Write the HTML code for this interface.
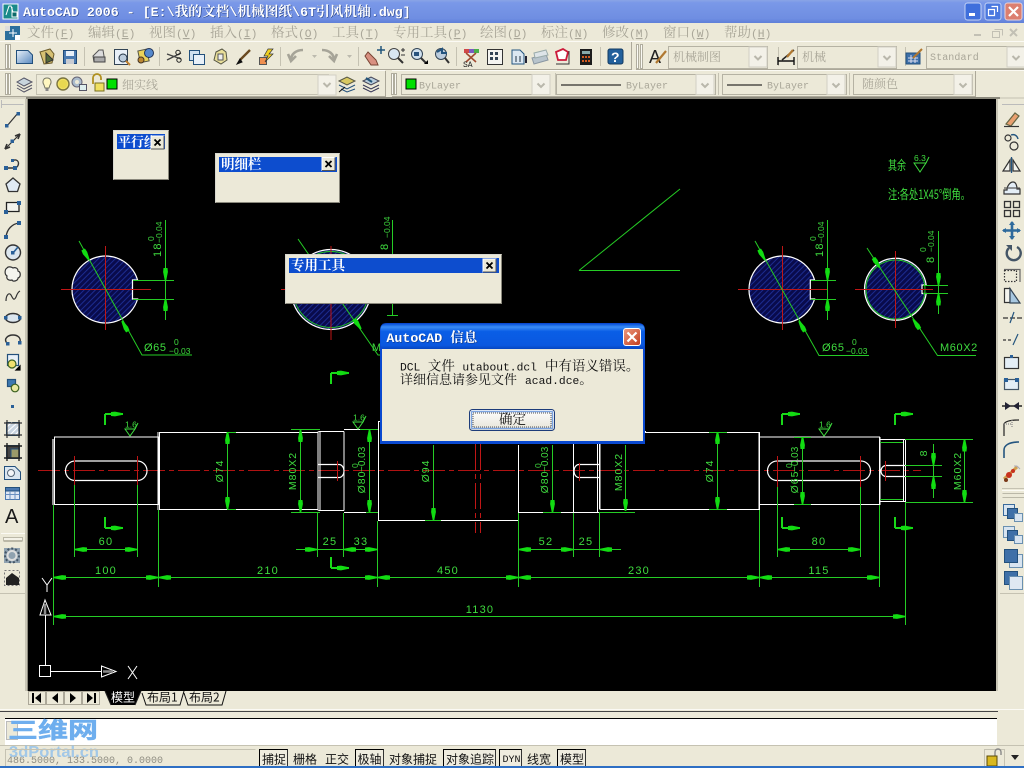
<!DOCTYPE html>
<html><head><meta charset="utf-8"><title>AutoCAD 2006</title>
<style>
html,body{margin:0;padding:0;background:#ece9d8;width:1024px;height:768px;overflow:hidden}
svg{display:block;position:absolute;left:0;top:0}
text{font-family:"Liberation Mono","Noto Serif CJK SC",monospace;white-space:pre}
.c{font-family:"Noto Serif CJK SC","Liberation Serif",serif;font-size:13.5px}
.c12{font-family:"Noto Serif CJK SC","Liberation Serif",serif;font-size:12px}
.m{font-family:"Liberation Mono",monospace;font-size:11.3px}
.t{font-family:"Liberation Mono",monospace;font-size:13.3px}
.tc{font-family:"Noto Serif CJK SC","Liberation Serif",serif;font-size:13.7px}
.m10{font-family:"Liberation Mono",monospace;font-size:10px}
.u{text-decoration:underline}
.d{fill:#a9a698}
.gl{stroke:#25cc25;stroke-width:1;fill:none;shape-rendering:crispEdges}
.gd{stroke:#25cc25;stroke-width:1;fill:none}
.wl{stroke:#fff;stroke-width:1.2;fill:none}
.wc{stroke:#fff;stroke-width:1.2;fill:none;shape-rendering:crispEdges}
.rl{stroke:#c01616;stroke-width:1;fill:none;shape-rendering:crispEdges}
.rd{stroke:#b01212;stroke-width:1.4;fill:none;stroke-dasharray:22 4 5 4;shape-rendering:crispEdges}
.dt{font-family:"Liberation Sans",sans-serif;font-size:11px;fill:#3fdc3f;letter-spacing:1.2px;text-anchor:middle}
.ds{font-family:"Liberation Sans",sans-serif;font-size:8.5px;fill:#3fdc3f}
.dr{font-family:"Liberation Sans",sans-serif;font-size:10.5px;fill:#3fdc3f;letter-spacing:1px;text-anchor:middle}
.ar{fill:#12dc12}
.ic{stroke:#333;fill:none;stroke-width:1.2}
.bl{fill:#2a6098}
.cb{fill:#ece9d8;stroke:#b5b2a3;stroke-width:1;shape-rendering:crispEdges}
.st{font-family:"Noto Sans CJK SC",sans-serif;font-size:12px;fill:#111}
</style></head>
<body>
<svg width="1024" height="768" viewBox="0 0 1024 768" xmlns="http://www.w3.org/2000/svg">
<defs>
<linearGradient id="tb" x1="0" y1="0" x2="0" y2="1"><stop offset="0" stop-color="#8aa4e6"/><stop offset=".12" stop-color="#7a98e8"/><stop offset=".8" stop-color="#6f8ee2"/><stop offset="1" stop-color="#5f7fd8"/></linearGradient>
<linearGradient id="dlg" x1="0" y1="0" x2="0" y2="1"><stop offset="0" stop-color="#0a55dc"/><stop offset=".12" stop-color="#3a8cf5"/><stop offset=".3" stop-color="#0a5ee6"/><stop offset=".85" stop-color="#0a58e0"/><stop offset="1" stop-color="#0746c0"/></linearGradient>
<linearGradient id="cls" x1="0" y1="0" x2="1" y2="1"><stop offset="0" stop-color="#ee9b80"/><stop offset="1" stop-color="#c03a1c"/></linearGradient>
<linearGradient id="btn" x1="0" y1="0" x2="0" y2="1"><stop offset="0" stop-color="#fff"/><stop offset="1" stop-color="#e6e3d6"/></linearGradient>
<linearGradient id="bi" x1="0" y1="0" x2="1" y2="1"><stop offset="0" stop-color="#e8f0f8"/><stop offset="1" stop-color="#5a8ac0"/></linearGradient>
<pattern id="h" width="4" height="4" patternUnits="userSpaceOnUse" patternTransform="rotate(45)"><rect width="4" height="4" fill="#090b4c"/><rect width="1" height="4" fill="#1c2c90"/></pattern>
<path id="au" class="ar" d="M-.8 0 L.8 0 L2.4 8 L2 12 L-2 12 L-2.4 8Z"/>
<path id="ad" class="ar" d="M-.8 0 L.8 0 L2.4 -8 L2 -12 L-2 -12 L-2.4 -8Z"/>
<path id="al" class="ar" d="M0 -.8 L0 .8 L8 2.4 L12 2 L12 -2 L8 -2.4Z"/>
<path id="arr" class="ar" d="M0 -.8 L0 .8 L-8 2.4 L-12 2 L-12 -2 L-8 -2.4Z"/>
<path id="chev" d="M-3.5 -2 L0 1.5 L3.5 -2" fill="none" stroke="#b9b7ab" stroke-width="2"/>
<g id="cbtn"><rect x="-9" y="-10" width="18" height="20" fill="#f3f1e8" stroke="#d2d0c4"/><use href="#chev" y="1"/></g>
<g id="fc"><rect x="0" y="0" width="13" height="13" fill="#ece9d8" stroke="#fff"/><path d="M13 0V13H0" fill="none" stroke="#555"/><path d="M3.5 3.5L9.5 9.5M9.5 3.5L3.5 9.5" stroke="#000" stroke-width="1.8"/></g>
<g id="stl"><path d="M0 0H18M0 0V11" stroke="#19d919" stroke-width="1.7" fill="none" shape-rendering="crispEdges"/><use href="#arr" x="18" y="0"/></g>
<g id="sbl"><path d="M0 0H18M0 0V-11" stroke="#19d919" stroke-width="1.7" fill="none" shape-rendering="crispEdges"/><use href="#arr" x="18" y="0"/></g>
<g id="sf"><path d="M-5 -7H5L0 0Z M-5 -7 L5 -7" stroke="#3fdc3f" fill="none"/><path d="M5 -7L8 -13" stroke="#3fdc3f" fill="none"/><text x="-5" y="-8.5" class="ds">1.6</text></g>
</defs>

<rect width="1024" height="768" fill="#ece9d8"/>

<!-- title bar -->
<rect x="0" y="0" width="1024" height="23" fill="url(#tb)"/>
<g>
<rect x="3" y="4" width="15" height="15" fill="#1a8a8a" stroke="#fff"/>
<path d="M6 15L9 6H11L14 15M12 7V15H17" stroke="#fff" fill="none"/>
<rect x="12" y="12" width="5" height="5" fill="#0c6a6a" stroke="#fff"/>
</g>
<text y="16.6" fill="#1f3b80" x="23.6" font-weight="bold"><tspan class="t">AutoCAD 2006 - [E:\</tspan><tspan class="tc">我的文档</tspan><tspan class="t">\</tspan><tspan class="tc">机械图纸</tspan><tspan class="t">\6T</tspan><tspan class="tc">引风机轴</tspan><tspan class="t">.dwg]</tspan></text>
<text y="16" fill="#fff" x="23" font-weight="bold"><tspan class="t">AutoCAD 2006 - [E:\</tspan><tspan class="tc">我的文档</tspan><tspan class="t">\</tspan><tspan class="tc">机械图纸</tspan><tspan class="t">\6T</tspan><tspan class="tc">引风机轴</tspan><tspan class="t">.dwg]</tspan></text>
<rect x="965" y="3" width="16" height="17" rx="2.5" fill="#3f6fdc" stroke="#c5d3f5"/><rect x="969" y="13" width="6" height="3" fill="#fff"/>
<rect x="985" y="3" width="16" height="17" rx="2.5" fill="#4a78df" stroke="#c5d3f5"/><path d="M991.5 6.5H997.5V12M988.5 9.5H994.5V15.5H988.5Z" stroke="#fff" fill="none" stroke-width="1.2"/>
<rect x="1005" y="3" width="17" height="17" rx="2.5" fill="#dc7f70" stroke="#e8d4da"/><path d="M1009 7L1018 16M1018 7L1009 16" stroke="#fff" stroke-width="2.2"/>

<!-- menu bar -->
<rect x="0" y="23" width="1024" height="18" fill="#ece9d8"/>
<rect x="5" y="26" width="15" height="14" fill="#2c6f9c"/><rect x="5" y="26" width="5" height="5" fill="#ddd"/><rect x="15" y="35" width="5" height="5" fill="#fff"/><path d="M9 33H17M13 29V37" stroke="#fff"/>
<g class="d">
<text x="27" y="37"><tspan class="c">文件</tspan><tspan class="m">(</tspan><tspan class="m u">F</tspan><tspan class="m">)</tspan></text>
<text x="88" y="37"><tspan class="c">编辑</tspan><tspan class="m">(</tspan><tspan class="m u">E</tspan><tspan class="m">)</tspan></text>
<text x="149" y="37"><tspan class="c">视图</tspan><tspan class="m">(</tspan><tspan class="m u">V</tspan><tspan class="m">)</tspan></text>
<text x="210" y="37"><tspan class="c">插入</tspan><tspan class="m">(</tspan><tspan class="m u">I</tspan><tspan class="m">)</tspan></text>
<text x="271" y="37"><tspan class="c">格式</tspan><tspan class="m">(</tspan><tspan class="m u">O</tspan><tspan class="m">)</tspan></text>
<text x="332" y="37"><tspan class="c">工具</tspan><tspan class="m">(</tspan><tspan class="m u">T</tspan><tspan class="m">)</tspan></text>
<text x="393" y="37"><tspan class="c">专用工具</tspan><tspan class="m">(</tspan><tspan class="m u">P</tspan><tspan class="m">)</tspan></text>
<text x="480" y="37"><tspan class="c">绘图</tspan><tspan class="m">(</tspan><tspan class="m u">D</tspan><tspan class="m">)</tspan></text>
<text x="541" y="37"><tspan class="c">标注</tspan><tspan class="m">(</tspan><tspan class="m u">N</tspan><tspan class="m">)</tspan></text>
<text x="602" y="37"><tspan class="c">修改</tspan><tspan class="m">(</tspan><tspan class="m u">M</tspan><tspan class="m">)</tspan></text>
<text x="663" y="37"><tspan class="c">窗口</tspan><tspan class="m">(</tspan><tspan class="m u">W</tspan><tspan class="m">)</tspan></text>
<text x="724" y="37"><tspan class="c">帮助</tspan><tspan class="m">(</tspan><tspan class="m u">H</tspan><tspan class="m">)</tspan></text>
</g>
<path d="M974 35H981" stroke="#c2c0b4" stroke-width="2"/><path d="M994.5 29.5H1002.5V35.5M992.5 31.5H999.5V37.5H992.5Z" stroke="#c2c0b4" fill="none"/><path d="M1010 29L1017 36M1017 29L1010 36" stroke="#c2c0b4" stroke-width="2"/>

<!-- toolbars rows -->
<rect x="0" y="41" width="1024" height="1" fill="#fbfaf4"/>
<path d="M0 69.5H631M636 69.5H1024" stroke="#aca899" shape-rendering="crispEdges"/>
<path d="M0 70.5H385M392 70.5H1024" stroke="#fbfaf4" shape-rendering="crispEdges"/>
<path d="M0 96.5H385M392 96.5H976" stroke="#aca899" shape-rendering="crispEdges"/>
<path d="M631.5 42V70M385.5 71V97M975.5 71V97" stroke="#aca899" shape-rendering="crispEdges"/>
<rect x="0" y="97" width="1024" height="2" fill="#d8d5c5"/><rect x="26" y="97" width="974" height="2" fill="#8a887c"/>
<!-- grippers -->
<g stroke="#b0ad9e" fill="#fbfaf4" shape-rendering="crispEdges">
<rect x="5.5" y="44.5" width="2" height="24"/><rect x="8.5" y="44.5" width="2" height="24"/>
<rect x="5.5" y="73.5" width="2" height="21"/><rect x="8.5" y="73.5" width="2" height="21"/>
<rect x="391.5" y="73.5" width="2" height="21"/><rect x="394.5" y="73.5" width="2" height="21"/>
<rect x="636.5" y="44.5" width="2" height="24"/><rect x="640.5" y="44.5" width="2" height="24"/>
</g>
<!-- separators -->
<path d="M84.5 47V66M159.5 47V66M280.5 47V66M358.5 47V66M456.5 47V66M600.5 47V66M555.5 73V95M718.5 73V95M849.5 73V95M778.5 47V66M905.5 47V66" stroke="#c5c2b2" shape-rendering="crispEdges"/>

<!-- row1 icons -->
<g>
<path d="M16.5 50.5H28L32.5 55V63.5H16.5Z" fill="url(#bi)" stroke="#23507c"/>
<path d="M40 52L50 49L54 54L52 63L44 64Z" fill="#d7c172" stroke="#6a5a2a"/><path d="M46 53L53 60L46 63Z" fill="#556b3a" stroke="#333"/>
<rect x="63.5" y="50.5" width="13" height="13" fill="#4a7ab0" stroke="#1f4a78"/><rect x="66" y="51" width="8" height="5" fill="#e8f0f8"/><rect x="66" y="59" width="8" height="5" fill="#c8ccd2"/>
<path d="M93 56L99 50H103L104 56L104 62H94Z" fill="#dcdcdc" stroke="#555"/><rect x="94" y="57" width="11" height="5" fill="#aaa" stroke="#444"/>
<rect x="114.5" y="49.5" width="13" height="15" fill="#e8f0f8" stroke="#345"/><circle cx="123" cy="58" r="4" fill="#bcd" stroke="#234"/><path d="M126 61L130 65" stroke="#c08030" stroke-width="2"/>
<rect x="139" y="50" width="9" height="12" fill="#ead25a" stroke="#554" transform="rotate(-12 143 56)"/><circle cx="149" cy="53" r="4.5" fill="#5588cc" stroke="#235"/><circle cx="141" cy="60" r="3" fill="#bb8833" stroke="#432"/>
<path d="M167 54L181 59M167 60L181 53" stroke="#444" stroke-width="1.3"/><circle cx="178" cy="52.5" r="2.2" fill="none" stroke="#222"/><circle cx="179" cy="60" r="2.2" fill="none" stroke="#222"/>
<rect x="189.5" y="50.5" width="10" height="10" fill="#cfe0f0" stroke="#23507c"/><rect x="193.5" y="54.5" width="11" height="10" fill="#e8f0f8" stroke="#23507c"/>
<path d="M216 52L222 49L226 52L227 60L221 64L214 60Z" fill="#e9df9a" stroke="#554"/><rect x="218" y="54" width="5" height="6" fill="#eee" stroke="#555"/>
<path d="M250 50L240 60" stroke="#6a4a20" stroke-width="2.4"/><path d="M240 59L237 64L242 62Z" fill="#111" stroke="#111"/>
<rect x="259.5" y="57.5" width="7" height="7" fill="#f09050" stroke="#555"/><path d="M268 49L264 56H268L265 62L273 54H269L273 49Z" fill="#f0d020" stroke="#333" stroke-width=".7"/>
<path d="M303 50C296 50 291 54 291 60M288 54L291 61L296 56" fill="none" stroke="#a6a498" stroke-width="2.6"/>
<path d="M312 55H317L314.500 58Z M347 55H352L349.500 58Z" fill="#bcbaae"/>
<path d="M322 50C329 50 334 54 334 60M337 54L334 61L329 56" fill="none" stroke="#a6a498" stroke-width="2.6"/>
<path d="M368 52L376 60L378 65H371L365 56Z" fill="#d89080" stroke="#743"/><path d="M377 50H385M381 46V54" stroke="#22557a" stroke-width="1.5"/>
<circle cx="394" cy="54" r="5.500" fill="#d9e6f2" stroke="#444"/><path d="M398 58L403 63" stroke="#333" stroke-width="2"/><path d="M401 50H405M403 48V52M401 55H405" stroke="#333"/>
<circle cx="417" cy="54" r="5.500" fill="#cfe0ee" stroke="#345"/><rect x="414" y="52" width="5" height="4" fill="#28537e"/><path d="M421 58L426 63" stroke="#333" stroke-width="2"/><path d="M424 64L428 60V64Z" fill="#000"/>
<circle cx="441" cy="54" r="5.500" fill="#bcd" stroke="#345"/><path d="M437 52L442 49V53H447" stroke="#24557f" stroke-width="2" fill="none"/><path d="M445 58L449 63" stroke="#333" stroke-width="2"/>
<rect x="464" y="49" width="15" height="4" fill="#7a5bc0"/><rect x="464" y="49" width="5" height="4" fill="#d04848"/><rect x="474" y="49" width="5" height="4" fill="#48b048"/><path d="M466 53L476 62M476 53L466 62" stroke="#a04a30" stroke-width="1.6"/><text x="463" y="67" font-size="8" fill="#222">SA</text>
<rect x="487.500" y="49.500" width="15" height="15" fill="#f4f4f0" stroke="#333"/><rect x="490" y="52" width="3" height="3" fill="#345"/><rect x="495" y="52" width="3" height="3" fill="#345"/><rect x="490" y="57" width="3" height="3" fill="#345"/><rect x="495" y="57" width="3" height="3" fill="#345"/>
<path d="M512 50H520L524 54V64H512Z" fill="#dbe7f2" stroke="#24557f"/><path d="M516 56L516 62M520 56V62" stroke="#234"/><path d="M526 56V63" stroke="#223" stroke-width="2"/>
<path d="M532 58L546 54L548 60L534 64Z" fill="#b8c4cc" stroke="#8a97a2"/><path d="M534 53L546 50L548 55L535 58Z" fill="#dde4e8" stroke="#9aa"/>
<path d="M556 52L563 49L568 52L566 60L558 60Z" fill="#fff" stroke="#cc1a3a" stroke-width="1.8"/><path d="M556 64H569V51" stroke="#333" fill="none"/>
<rect x="580" y="49" width="12" height="16" fill="#1c1c1c"/><rect x="582" y="51" width="8" height="3" fill="#8aa"/><g fill="#d05a20"><rect x="582" y="56" width="2" height="2"/><rect x="585" y="56" width="2" height="2"/><rect x="588" y="56" width="2" height="2"/><rect x="582" y="60" width="2" height="2"/><rect x="585" y="60" width="2" height="2"/><rect x="588" y="60" width="2" height="2"/></g>
<rect x="608" y="49" width="15" height="15" rx="2" fill="#22609c" stroke="#143a60"/><text x="611" y="62" font-size="14" font-weight="bold" fill="#fff" style='font-family:"Liberation Sans",sans-serif'>?</text>
</g>
<!-- text style combos -->
<text x="649" y="63" font-size="18" fill="#222" style='font-family:"Liberation Sans",sans-serif'>A</text><path d="M666 51L656 63" stroke="#b07830" stroke-width="2.2"/>
<rect x="668.500" y="46.500" width="99" height="22" class="cb"/><text x="673" y="61" class="c12 d">机械制图</text><use href="#cbtn" x="758" y="57"/>
<path d="M778 61H794M778 57V65M794 57V65" stroke="#111" stroke-width="1.4"/><path d="M782 60L794 50" stroke="#222" stroke-width="1.5"/><path d="M793 50L787 57" stroke="#b07830" stroke-width="2.2"/>
<rect x="797.500" y="46.500" width="99" height="22" class="cb"/><text x="802" y="61" class="c12 d">机械</text><use href="#cbtn" x="887" y="57"/>
<rect x="906" y="53" width="14" height="11" fill="#3d6fa8" stroke="#23507c"/><path d="M908 58H918M908 61H918M911 55V63M915 55V63" stroke="#dde"/><path d="M922 49L913 58" stroke="#b07830" stroke-width="2"/>
<rect x="926.500" y="46.500" width="110" height="22" class="cb"/><text x="930" y="60" class="m10 d" letter-spacing=".1">Standard</text><use href="#cbtn" x="1016" y="57"/>

<!-- row 2 -->
<path d="M17 82L24 78L32 82L24 86Z" fill="#c8d4dc" stroke="#556"/><path d="M17 85L24 89L32 85M17 88L24 92L32 88" stroke="#556" fill="none"/>
<rect x="36.500" y="74.500" width="292" height="20" fill="#ece9d8" stroke="#c5c2b2" shape-rendering="crispEdges"/>
<path d="M47 78C43 78 42 82 44 85L45 88H49L50 85C52 82 51 78 47 78Z" fill="#fff7c0" stroke="#776"/><rect x="45.500" y="88.500" width="3" height="2.500" fill="#888"/>
<circle cx="63" cy="84" r="6" fill="#f0e060" stroke="#7a7440" stroke-width="1.4"/><circle cx="63" cy="84" r="4" fill="#e8d850"/>
<circle cx="77" cy="82" r="5" fill="#aabbcc" stroke="#667"/><circle cx="77" cy="82" r="2" fill="#ece9d8"/><rect x="79.500" y="84.500" width="7" height="6" fill="#ddeeee" stroke="#556"/>
<path d="M93 84V78A4 4 0 0 1 101 78V80" stroke="#b09020" stroke-width="1.8" fill="none"/><rect x="95" y="83" width="9" height="8" fill="#f0e060" stroke="#777020"/>
<rect x="107" y="79" width="10" height="10" fill="#00e000" stroke="#000"/>
<text x="122" y="89" class="c12 d">细实线</text>
<rect x="318" y="75" width="18" height="20" fill="#f3f1e8" stroke="#d2d0c4"/><use href="#chev" x="327" y="85"/>
<path d="M339 81L347 77L355 81L347 85Z" fill="#d8c860" stroke="#554"/><path d="M339 85L347 89L355 85M341 89L347 92L355 89" stroke="#23507c" fill="none"/><path d="M339 92L345 87" stroke="#111"/>
<path d="M363 81L371 77L379 81L371 85Z" fill="#b8ccdc" stroke="#445"/><path d="M363 85L371 89L379 85M363 88L371 92L379 88" stroke="#335" fill="none"/><path d="M366 78L372 82" stroke="#22557a" stroke-width="2"/>
<rect x="401.500" y="74.500" width="147" height="20" class="cb"/><rect x="406" y="79" width="10" height="10" fill="#00e000" stroke="#000"/><text x="419" y="88.500" class="m10 d">ByLayer</text><use href="#cbtn" x="541" y="84.500"/>
<rect x="556.500" y="74.500" width="159" height="20" class="cb"/><path d="M561 85H621" stroke="#000" stroke-width="1"/><text x="626" y="88.500" class="m10 d">ByLayer</text><use href="#cbtn" x="705" y="84.500"/>
<rect x="722.500" y="74.500" width="124" height="20" class="cb"/><path d="M727 85H762" stroke="#000" stroke-width="1"/><text x="767" y="88.500" class="m10 d">ByLayer</text><use href="#cbtn" x="836" y="84.500"/>
<rect x="853.500" y="74.500" width="119" height="20" class="cb"/><text x="862" y="88" class="c12 d">随颜色</text><use href="#cbtn" x="963" y="84.500"/>

<!-- drawing area -->
<rect x="28" y="99" width="968" height="592" fill="#000"/>

<!-- section left -->
<g>
<path d="M132.500 280V299H137.600A33.500 33.500 0 1 1 137.600 280Z" fill="url(#h)" stroke="#fff" stroke-width="1.2"/>
<path d="M61 289.500H151M105.500 246V330" class="rl"/>
<path d="M79 241L142 355H192" class="gd"/>
<path d="M133 280.500H174M133 299.500H174M165.500 220V320" class="gl"/>
<use href="#ad" x="165.500" y="280"/><use href="#au" x="165.500" y="299"/>
<use href="#arr" transform="translate(89 260) rotate(60.700)"/><use href="#al" transform="translate(122 321) rotate(60.700)"/>
<text x="144" y="351" class="dt" style="text-anchor:start;letter-spacing:.6px">Ø65</text><text x="174" y="345" class="ds">0</text><text x="169" y="354" class="ds">−0.03</text>
<text transform="translate(161 257) rotate(-90)" class="dt" style="text-anchor:start">18</text><text transform="translate(162 243) rotate(-90)" class="ds">−0.04</text><text transform="translate(154 241) rotate(-90)" class="ds">0</text>
</g>
<!-- section hidden -->
<g>
<circle cx="331" cy="289.500" r="40" fill="url(#h)" stroke="#fff" stroke-width="1.2"/><circle cx="331" cy="289.500" r="38" fill="none" stroke="#25cc25"/>
<path d="M331 246V340M281 289.500H370" class="rl"/>
<path d="M298 239L378 355H385" class="gd"/>
<use href="#arr" transform="translate(361 329) rotate(55)"/>
<path d="M392.500 220V315M387 315.500H398" class="gl"/>
<text transform="translate(388 250) rotate(-90)" class="dt" style="text-anchor:start">8</text><text transform="translate(390 238) rotate(-90)" class="ds">−0.04</text>
<text x="377" y="351" class="dt">M</text>
</g>
<!-- section right 1 -->
<g>
<path d="M810.300 280V299H814.600A33.500 33.500 0 1 1 814.600 280Z" fill="url(#h)" stroke="#fff" stroke-width="1.2"/>
<path d="M738 289.500H827M782.500 246V330" class="rl"/>
<path d="M755 241L819 355.500H869" class="gd"/>
<path d="M811 280.500H836M811 299.500H836M827.500 220V320" class="gl"/>
<use href="#ad" x="827.500" y="280"/><use href="#au" x="827.500" y="299"/>
<use href="#arr" transform="translate(765 260) rotate(60.700)"/><use href="#al" transform="translate(799 321) rotate(60.700)"/>
<text x="822" y="351" class="dt" style="text-anchor:start;letter-spacing:.6px">Ø65</text><text x="852" y="345" class="ds">0</text><text x="846" y="354" class="ds">−0.03</text>
<text transform="translate(823 257) rotate(-90)" class="dt" style="text-anchor:start">18</text><text transform="translate(824 243) rotate(-90)" class="ds">−0.04</text><text transform="translate(816 241) rotate(-90)" class="ds">0</text>
</g>
<!-- section right 2 -->
<g>
<path d="M922 285V293.500H926.200A31 31 0 1 1 926.200 285Z" fill="url(#h)" stroke="#fff" stroke-width="1.2"/>
<circle cx="895.500" cy="289.500" r="29.500" fill="none" stroke="#25cc25"/>
<path d="M855 289.500H933M895.500 251V328" class="rl"/>
<path d="M867 248L937.500 355.500H976" class="gd"/>
<path d="M923 285.500H948M923 293.500H948M938.500 231V314" class="gl"/>
<use href="#ad" x="938.500" y="285"/><use href="#au" x="938.500" y="293.500"/>
<use href="#arr" transform="translate(880 268) rotate(57)"/><use href="#al" transform="translate(913 319) rotate(57)"/>
<text x="940" y="351" class="dt" style="text-anchor:start;letter-spacing:.6px">M60X2</text>
<text transform="translate(934 263) rotate(-90)" class="dt" style="text-anchor:start">8</text><text transform="translate(934 252) rotate(-90)" class="ds">−0.04</text><text transform="translate(926 252) rotate(-90)" class="ds">0</text>
</g>
<!-- notes -->
<text x="888" y="170" font-size="13" fill="#3fdc3f" style='font-family:"Noto Sans CJK SC",sans-serif' textLength="18" lengthAdjust="spacingAndGlyphs">其余</text>
<path d="M914 163H926L920 172Z M926 163L929 157" stroke="#3fdc3f" fill="none"/><text x="914" y="161" class="ds">6.3</text>
<text x="888" y="199" font-size="13" fill="#3fdc3f" style='font-family:"Noto Sans CJK SC",sans-serif' textLength="82" lengthAdjust="spacingAndGlyphs">注:各处1X45°倒角。</text>
<!-- triangle -->
<path d="M579 270.500H680" class="gl"/><path d="M579 270.500L680 189" class="gd"/>

<!-- shaft -->
<g>
<path d="M38 470.500H921" class="rd"/>
<path d="M54.500 437H159V504.500H54.500Z" class="wc"/><path d="M53 439V505" class="wl" stroke-width="1"/>
<path d="M159.500 432.500H318V509.500H159.500Z M158 432V510" class="wc" style="stroke-width:1.4"/>
<path d="M318.500 431.500H344M318.500 510.500H344M344 431.500V510.500M320 431.500V510.500M318 431.500V510.500" class="wc"/>
<path d="M344 429.500H378M344 512.500H378" class="wc"/>
<path d="M378 421.500H385M378.500 421.500V520.500H518.500V512M518.500 512.500H599.500M573.500 512.500V430M599.500 509V430M597.500 512V430M643 431.500H646M518.500 512V445" class="wc" style="stroke-width:1.4"/>
<path d="M600 432.500H759.500V509.500H600Z" class="wc" style="stroke-width:1.2"/><path d="M759 432V510" class="wc" style="stroke-width:1.5"/>
<path d="M759.500 437H879.500V504.500H759.500Z" class="wc"/><path d="M879.500 437V505" class="wc" style="stroke-width:1.5"/>
<path d="M880 439.500H905.500V501.500H880M905.500 439V502M903.500 439V502" class="wc"/>
<path d="M880 442.500H903M880 499.500H903" class="gl"/>
<rect x="65.500" y="461" width="81.500" height="19.500" rx="9.700" class="wl"/>
<rect x="767.500" y="461" width="103" height="19.500" rx="9.700" class="wl"/>
<path d="M318 464.500H339A5 6.500 0 0 1 339 477.500H318" class="wl"/>
<path d="M599 464.500H579A5 6.500 0 0 0 579 477.500H599" class="wl"/>
<path d="M905 465.500H886A5 5.500 0 0 0 886 476.500H905" class="wl"/>
<path d="M74.500 456V485M137.500 456V485M337.500 461V481M579.500 463V481M777.500 456V487M860.500 456V487M885.500 461V481" class="rl"/>
<path d="M475.500 444V533M480.500 444V533" class="rl" stroke-dasharray="26 4 5 4"/>

<!-- dims -->
<path d="M53.500 505V625M158.500 510V587M377.500 521V587M518.500 513V587M759.500 510V587M879.500 505V587M905.500 502V625" class="gl"/>
<path d="M53 577.500H879M53 616.500H905" class="gl"/>
<use href="#al" x="54" y="577.500"/><use href="#arr" x="158" y="577.500"/><use href="#al" x="159" y="577.500"/><use href="#arr" x="377" y="577.500"/><use href="#al" x="378" y="577.500"/><use href="#arr" x="518" y="577.500"/><use href="#al" x="519" y="577.500"/><use href="#arr" x="759" y="577.500"/><use href="#al" x="760" y="577.500"/><use href="#arr" x="879" y="577.500"/>
<use href="#al" x="54" y="616.500"/><use href="#arr" x="905" y="616.500"/>
<text x="106" y="574" class="dt">100</text><text x="268" y="574" class="dt">210</text><text x="448" y="574" class="dt">450</text><text x="639" y="574" class="dt">230</text><text x="819" y="574" class="dt">115</text><text x="480" y="613" class="dt">1130</text>
<path d="M74.500 485V557M137.500 485V557M74 549.500H138" class="gl"/><use href="#al" x="75" y="549.500"/><use href="#arr" x="137" y="549.500"/><text x="106" y="545" class="dt">60</text>
<path d="M317.500 513V557M343.500 513V557M296 549.500H378" class="gl"/><use href="#arr" x="317" y="549.500"/><use href="#al" x="344" y="549.500"/><use href="#arr" x="377" y="549.500"/><text x="330" y="545" class="dt">25</text><text x="361" y="545" class="dt">33</text>
<path d="M573.500 513V557M599.500 513V557M518 549.500H621" class="gl"/><use href="#al" x="519" y="549.500"/><use href="#arr" x="573" y="549.500"/><use href="#al" x="600" y="549.500"/><text x="546" y="545" class="dt">52</text><text x="586" y="545" class="dt">25</text>
<path d="M777.500 487V557M860.500 487V557M777 549.500H861" class="gl"/><use href="#al" x="778" y="549.500"/><use href="#arr" x="860" y="549.500"/><text x="819" y="545" class="dt">80</text>

<!-- vertical dims -->
<path d="M227.500 432V509M227 432.500H236M227 509.500H236" class="gl"/><use href="#au" x="227.500" y="432"/><use href="#ad" x="227.500" y="509"/>
<text transform="translate(223 471) rotate(-90)" class="dr">Ø74</text>
<path d="M300.500 429V513M291 429.500H320M291 512.500H320" class="gl"/><use href="#au" x="300.500" y="430"/><use href="#ad" x="300.500" y="512"/>
<text transform="translate(296 471) rotate(-90)" class="dr">M80X2</text>
<path d="M369.500 429V513M360 429.500H378M366 512.500H378" class="gl"/><use href="#au" x="369.500" y="430"/><use href="#ad" x="369.500" y="512"/>
<text transform="translate(365 482) rotate(-90)" class="dr">Ø80</text><text transform="translate(365 472) rotate(-90)" class="ds" style="font-size:10px">−0.03</text><text transform="translate(358 468) rotate(-90)" class="ds">0</text>
<path d="M433.500 445V520M425 520.500H441" class="gl"/><use href="#ad" x="433.500" y="520"/>
<text transform="translate(429 471) rotate(-90)" class="dr">Ø94</text>
<path d="M552.500 445V512M543 512.500H561" class="gl"/><use href="#ad" x="552.500" y="512"/>
<text transform="translate(548 482) rotate(-90)" class="dr">Ø80</text><text transform="translate(548 472) rotate(-90)" class="ds" style="font-size:10px">−0.03</text><text transform="translate(541 468) rotate(-90)" class="ds">0</text>
<path d="M625.500 445V510M599 512.500H635M600 430H632" class="gl"/><use href="#ad" x="625.500" y="511"/>
<text transform="translate(622 472) rotate(-90)" class="dr">M80X2</text>
<path d="M717.500 432V509M709 432.500H727M709 509.500H727" class="gl"/><use href="#au" x="717.500" y="432"/><use href="#ad" x="717.500" y="509"/>
<text transform="translate(713 471) rotate(-90)" class="dr">Ø74</text>
<path d="M802.500 437V504M794 437.500H811M794 504.500H811" class="gl"/><use href="#au" x="802.500" y="437"/><use href="#ad" x="802.500" y="504"/>
<text transform="translate(798 482) rotate(-90)" class="dr">Ø65</text><text transform="translate(798 472) rotate(-90)" class="ds" style="font-size:10px">−0.03</text><text transform="translate(792 468) rotate(-90)" class="ds">0</text>
<path d="M933.500 444V498M905 465.500H942M905 476.500H942" class="gl"/><use href="#ad" x="933.500" y="465"/><use href="#au" x="933.500" y="477"/>
<text transform="translate(927 453) rotate(-90)" class="dr">8</text>
<path d="M964.500 439V502M905 439.500H973M905 502.500H973" class="gl"/><use href="#au" x="964.500" y="439.500"/><use href="#ad" x="964.500" y="502"/>
<text transform="translate(961 471) rotate(-90)" class="dr">M60X2</text>
<!-- section marks -->
<use href="#stl" x="105" y="414"/><use href="#sbl" x="105" y="528"/>
<use href="#stl" x="331" y="373"/><use href="#sbl" x="331" y="568"/>
<use href="#stl" x="782" y="414"/><use href="#sbl" x="782" y="528"/>
<use href="#stl" x="895" y="414"/><use href="#sbl" x="895" y="528"/>
<use href="#sf" x="130" y="436"/><use href="#sf" x="358" y="429"/><use href="#sf" x="824" y="436"/>
</g>

<!-- UCS icon -->
<g stroke="#fff" fill="none">
<path d="M42 578L47 585L52 578M47 585V592" stroke-width="1"/>
<path d="M45.500 615V665" shape-rendering="crispEdges"/>
<path d="M45 600L40 615H51Z"/><path d="M45 604L45 614" stroke="#888" stroke-width="2.500"/>
<rect x="39.500" y="665.500" width="11" height="11" shape-rendering="crispEdges"/>
<path d="M50 671.500H101" shape-rendering="crispEdges"/>
<path d="M101.500 666V677L116 671.500Z"/><path d="M103 671.500H113" stroke="#888" stroke-width="2.500"/>
<path d="M128 666L137 679M137 666L128 679" stroke-width="1"/>
</g>

<!-- floating panels -->
<g shape-rendering="crispEdges">
<rect x="113" y="130" width="56" height="50" fill="#ece9d8"/><path d="M113.500 180V130.500H168.500" stroke="#d8d8d0" fill="none"/><path d="M168.500 130.500V179.500H113.500" stroke="#8a887c" fill="none"/>
<rect x="117" y="134" width="48" height="15" fill="#0d4dce"/>
<rect x="215" y="153" width="125" height="50" fill="#ece9d8"/><path d="M215.500 203V153.500H339.500" stroke="#d8d8d0" fill="none"/><path d="M339.500 153.500V202.500H215.500" stroke="#8a887c" fill="none"/>
<rect x="219" y="157" width="118" height="15" fill="#0d4dce"/>
<rect x="285" y="254" width="217" height="50" fill="#ece9d8"/><path d="M285.500 304V254.500H501.500" stroke="#d8d8d0" fill="none"/><path d="M501.500 254.500V303.500H285.500" stroke="#8a887c" fill="none"/>
<rect x="289" y="258" width="210" height="15" fill="#0d4dce"/>
</g>
<svg x="117" y="134" width="35" height="15"><text x="1" y="12.500" fill="#fff" font-size="13" font-weight="bold" style='font-family:"Noto Serif CJK SC",serif'>平行线</text></svg>
<use href="#fc" x="151" y="136"/>
<text x="221" y="169" fill="#fff" font-size="13.500" font-weight="bold" style='font-family:"Noto Serif CJK SC",serif'>明细栏</text>
<use href="#fc" x="322" y="157.500"/>
<text x="291" y="270" fill="#fff" font-size="13.500" font-weight="bold" style='font-family:"Noto Serif CJK SC",serif'>专用工具</text>
<use href="#fc" x="483" y="259"/>

<!-- dialog -->
<path d="M380 444V330Q380 323 387 323H638Q645 323 645 330V444Z" fill="#0a49d0"/>
<rect x="380.500" y="324" width="264" height="25" rx="5" fill="url(#dlg)"/>
<rect x="382" y="349" width="261" height="92" fill="#ece9d8" shape-rendering="crispEdges"/>
<text x="387" y="342.500" fill="#0b2f7c" font-weight="bold"><tspan class="t">AutoCAD</tspan><tspan class="c" dx="8">信息</tspan></text>
<text x="386.400" y="342" fill="#fff" font-weight="bold"><tspan class="t">AutoCAD</tspan><tspan class="c" dx="8">信息</tspan></text>
<rect x="623.500" y="328.500" width="17" height="17" rx="2.500" fill="url(#cls)" stroke="#fff"/><path d="M627.500 332.500L636.500 341.500M636.500 332.500L627.500 341.500" stroke="#fff" stroke-width="2.200"/>
<text x="400" y="370.500" fill="#111"><tspan class="m">DCL</tspan><tspan class="c" dx="7.500">文件</tspan><tspan class="m" dx="7.500">utabout.dcl</tspan><tspan class="c" dx="8">中有语义错误。</tspan></text>
<text x="400" y="384" fill="#111"><tspan class="c" style="font-size:13px">详细信息请参见文件</tspan><tspan class="m" dx="8">acad.dce</tspan><tspan class="c">。</tspan></text>
<rect x="469.500" y="409.500" width="85" height="21" rx="3" fill="url(#btn)" stroke="#1d3c7a"/><rect x="471.500" y="411.500" width="81" height="17" rx="1" fill="none" stroke="#7ca4e0" stroke-width="1.400"/><rect x="473" y="413" width="78" height="14" fill="none" stroke="#555" stroke-dasharray="1 1"/>
<text x="499" y="424" class="c" fill="#111">确定</text>

<!-- tabs -->
<rect x="28" y="691" width="968" height="17" fill="#ece9d8"/>
<g shape-rendering="crispEdges"><rect x="28.500" y="691.500" width="17" height="13" fill="#ece9d8" stroke="#aca899"/><rect x="46.500" y="691.500" width="17" height="13" fill="#ece9d8" stroke="#aca899"/><rect x="64.500" y="691.500" width="17" height="13" fill="#ece9d8" stroke="#aca899"/><rect x="82.500" y="691.500" width="17" height="13" fill="#ece9d8" stroke="#aca899"/></g>
<path d="M32 693V703H34V693ZM41 693L35 698L41 703Z M58 693L52 698L58 703Z M70 693L76 698L70 703Z M87 693L93 698L87 703ZM94 693V703H96V693Z" fill="#000"/>
<path d="M105 691L111 705H135L141 691Z" fill="#000"/>
<path d="M105 691L111 705M135 705L141 691" stroke="#222" fill="none"/>
<text x="111" y="701.500" fill="#fff" font-size="12" style='font-family:"Noto Sans CJK SC",sans-serif'>模型</text>
<path d="M142 693L146 705H180L184 691M184 693L188 705H222L226 691" stroke="#111" fill="#ece9d8"/>
<text x="147" y="701.500" fill="#111" font-size="12" style='font-family:"Noto Sans CJK SC",sans-serif'>布局1</text>
<text x="189" y="701.500" fill="#111" font-size="12" style='font-family:"Noto Sans CJK SC",sans-serif'>布局2</text>

<!-- command area -->
<rect x="0" y="708" width="1024" height="60" fill="#ece9d8"/>
<path d="M0 709.500H1024" stroke="#fbfaf4" shape-rendering="crispEdges"/>
<path d="M0 711.500H998" stroke="#444" shape-rendering="crispEdges"/>
<rect x="5" y="718" width="992" height="27" fill="#fff"/>
<path d="M5 718.500H997" stroke="#000" stroke-width="1.400" shape-rendering="crispEdges"/>
<path d="M0 745.500H1024" stroke="#c5c2b2" shape-rendering="crispEdges"/>
<rect x="6.500" y="721.500" width="11" height="18" fill="#ece9d8" stroke="#bbb" shape-rendering="crispEdges"/>
<text x="8" y="738" font-size="22" font-weight="bold" fill="#6eaeee" stroke="#6eaeee" stroke-width=".5" textLength="90" lengthAdjust="spacingAndGlyphs" style='font-family:"WenQuanYi Zen Hei","Noto Sans CJK SC",sans-serif'>三维网</text>
<text x="7" y="763" class="m10" fill="#8f8d82">486.5000, 133.5000, 0.0000</text>
<text x="9" y="757" font-size="16" font-weight="bold" fill="#8abcec" fill-opacity=".75" textLength="90" lengthAdjust="spacingAndGlyphs" style='font-family:"Liberation Sans",sans-serif'>3dPortal.cn</text>

<!-- status bar -->
<path d="M5.500 766V749.500H255.500" stroke="#c5c2b2" fill="none" shape-rendering="crispEdges"/>
<g shape-rendering="crispEdges" fill="#efecdf" stroke="#333">
<rect x="259.500" y="749.500" width="28" height="17"/>
<rect x="355.500" y="749.500" width="28" height="17"/>
<rect x="443.500" y="749.500" width="52" height="17"/>
<rect x="499.500" y="749.500" width="22" height="17"/>
<rect x="557.500" y="749.500" width="28" height="17"/>
</g>
<path d="M259.500 766V749.500H287.500M355.500 766V749.500H383.500M443.500 766V749.500H495.500M499.500 766V749.500H521.500M557.500 766V749.500H585.500" stroke="#000" stroke-width="1.200" fill="none" shape-rendering="crispEdges"/>
<g class="st">
<text x="262" y="763.500" class="st">捕捉</text><text x="293" y="763.500" class="st">栅格</text><text x="325" y="763.500" class="st">正交</text><text x="357.500" y="763.500" class="st">极轴</text><text x="389" y="763.500" class="st">对象捕捉</text><text x="446" y="763.500" class="st">对象追踪</text><text x="502.500" y="762" class="m10" fill="#111" textLength="18" lengthAdjust="spacingAndGlyphs">DYN</text><text x="527" y="763.500" class="st">线宽</text><text x="560" y="763.500" class="st">模型</text>
</g>
<rect x="984.500" y="749.500" width="20" height="17" fill="none" stroke="#c5c2b2" shape-rendering="crispEdges"/>
<path d="M995 756V752A3 3 0 0 1 1001 752V755" stroke="#888" stroke-width="1.400" fill="none"/><rect x="987" y="756" width="10" height="10" fill="#d8b820" stroke="#5a4a08"/>
<path d="M1011 755H1019L1015 760Z" fill="#222"/>
<rect x="0" y="766" width="1024" height="2" fill="#2e6fc4"/>

<!-- left toolbar -->
<rect x="0" y="99" width="27" height="592" fill="#ece9d8"/>
<rect x="25" y="99" width="2" height="592" fill="#c8c5b5"/>
<path d="M1.500 104.500H23.500M1.500 100V108" stroke="#bbb" fill="none" shape-rendering="crispEdges"/>
<g fill="none" stroke="#333" stroke-width="1.200">
<path d="M7 126L18 113"/><rect class="bl" x="5" y="124" width="3.500" height="3.500" stroke="none"/><rect class="bl" x="16.500" y="112" width="3.500" height="3.500" stroke="none"/>
<path d="M5 149L20 134"/><path d="M20 134L15 136M20 134L18 139M5 149L10 147M5 149L7 144" stroke-width="1.600"/><rect class="bl" x="10.500" y="139.500" width="3.500" height="3.500" stroke="none"/>
<path d="M6 168H14C19 168 20 161 16 160C14 159.500 12 161 12 162" stroke-width="1.400"/><rect class="bl" x="4" y="166" width="4" height="4" stroke="none"/><rect class="bl" x="13" y="166" width="4" height="4" stroke="none"/><rect class="bl" x="11" y="159" width="3" height="3" stroke="none"/>
<path d="M13 178L20 184L17.500 191.500H8.500L6 184Z" fill="#e0eaf4" stroke-width="1.300"/>
<path d="M6.500 202.500H19V211.500H6.500Z" fill="#f4f4ee" stroke="#222" stroke-width="1.300"/><rect class="bl" x="4" y="210" width="4" height="4" stroke="none"/><rect class="bl" x="17" y="201" width="4" height="4" stroke="none"/>
<path d="M6 237C7 229 12 224 19 223" stroke="#333" stroke-width="1.300"/><rect class="bl" x="4" y="235" width="4" height="4" stroke="none"/><rect class="bl" x="17" y="221" width="4" height="4" stroke="none"/>
<circle cx="13" cy="252.500" r="7.500" fill="#dce6ee" stroke-width="1.400"/><path d="M13 253L18 247" stroke="#2a6098" stroke-width="1.600"/><rect class="bl" x="11" y="251" width="3.500" height="3.500" stroke="none"/>
<path d="M7 268C8 266 12 267 13 268C15 267 18 268 18 271C21 272 21 277 18 278C18 281 13 282 12 280C9 281 6 279 7 276C4 274 5 269 7 268Z" fill="#f4f4ee" stroke-width="1.200"/>
<path d="M6 301C6 295 9 292 11 295C13 299 14 301 16 297C17 294 18 292 20 291"/>
<ellipse cx="13" cy="318" rx="7.500" ry="4.500" fill="#dce6ee" stroke-width="1.400"/><rect class="bl" x="4" y="316" width="3.500" height="3.500" stroke="none"/><rect class="bl" x="18" y="316" width="3.500" height="3.500" stroke="none"/>
<path d="M7 343C3 339 8 335 13 335C18 335 21 338 20 342" stroke-width="1.400"/><rect class="bl" x="6" y="342" width="3.500" height="3.500" stroke="none"/><rect class="bl" x="18" y="341" width="3.500" height="3.500" stroke="none"/>
<rect x="7.500" y="354.500" width="11" height="11" fill="#e8f0f8" stroke="#23507c"/><circle cx="12" cy="364" r="4" fill="#f0e070" stroke="#3a6020"/><path d="M16 370L20 366V370Z" fill="#000" stroke="#000"/>
<rect x="7.500" y="379.500" width="8" height="7" fill="#3c78b0" stroke="#23507c"/><circle cx="15" cy="388" r="3.800" fill="#e8e8a0" stroke="#3a6020"/>
<rect class="bl" x="11" y="405" width="3" height="3" stroke="none"/>
</g>
<g fill="none" stroke="#23507c">
<rect x="6.500" y="422.500" width="13" height="13" fill="#c8d4e0"/><path d="M7 427L12 422M7 432L17 423M10 435L19 426M15 435L19 431" stroke="#fff"/><path d="M4 423H22M4 435H22M7 420V438M19 420V438" stroke="#333" stroke-width="1.200"/>
<rect x="6.500" y="445.500" width="13" height="13" fill="#444"/><rect x="11" y="449" width="8" height="9" fill="#9a9a6a"/><path d="M4 446H22M4 458H22M7 443V461M19 443V461" stroke="#222" stroke-width="1.400"/>
<path d="M4.500 466.500H15L20.500 472V479.500H4.500Z" fill="#dae6f0"/><circle cx="11" cy="473" r="3.500" fill="#f4f6f8" stroke="#567"/>
<rect x="5.500" y="487.500" width="14" height="12" fill="#dfe8f4" stroke="#4a78b0"/><rect x="5.500" y="487.500" width="14" height="3.500" fill="#4a78b0"/><path d="M5.500 494.500H19.500M10 491V499.500M15 491V499.500" stroke="#6a90c0"/>
</g>
<text x="5" y="523" font-size="20" fill="#1a1a1a" style='font-family:"Liberation Sans",sans-serif'>A</text>
<path d="M1 533.500H25" stroke="#fbfaf4" shape-rendering="crispEdges"/>
<path d="M3.500 537.500H22.500V540.500H3.500ZM3.500 541.500H22.500" stroke="#bbb8a8" fill="#f4f2e8" shape-rendering="crispEdges"/>
<rect x="4" y="548" width="16" height="15" fill="#90a2b0"/><circle cx="12" cy="555.500" r="4.500" fill="none" stroke="#ddd" stroke-width="2"/><circle cx="12" cy="555.500" r="7" fill="none" stroke="#445566" stroke-dasharray="2 2" stroke-width="2"/>
<rect x="4.500" y="570.500" width="15" height="15" fill="none" stroke="#777" stroke-dasharray="2 2"/><path d="M6 578L12 573L19 578V585H6Z" fill="#222"/>
<path d="M0 593.500H25" stroke="#c5c2b2" shape-rendering="crispEdges"/>
<rect x="27" y="99" width="1" height="592" fill="#8a887c"/>

<!-- right toolbar -->
<rect x="996" y="99" width="28" height="609" fill="#ece9d8"/>
<rect x="996" y="99" width="2" height="592" fill="#c8c5b5"/>
<path d="M1002 104.500H1024" stroke="#bbb" shape-rendering="crispEdges"/>
<g fill="none" stroke="#333" stroke-width="1.200">
<path d="M1006 124L1015 113L1019 116L1011 126Z" fill="#e9a070" stroke="#664"/><path d="M1004 126.500H1019"/>
<circle cx="1008" cy="138" r="3"/><circle cx="1014" cy="146" r="4"/><path d="M1011 135C1014 134 1017 135 1018 139" stroke="#24557f" stroke-width="1.400"/>
<path d="M1010 160L1003 171H1010ZM1013 160L1020 171H1013Z" fill="#f4f4ee"/><path d="M1011.500 157V173" stroke="#24557f" stroke-width="1.300"/>
<path d="M1004 194V190H1007C1007 186 1010 182 1013 182C1016 182 1017 186 1017 189H1020V194Z" fill="#e4eef6"/><path d="M1004 188H1020" stroke="#555"/>
<g stroke-width="1.300"><rect x="1004.500" y="201.500" width="6" height="6"/><rect x="1013.500" y="201.500" width="6" height="6"/><rect x="1004.500" y="210.500" width="6" height="6"/><rect x="1013.500" y="210.500" width="6" height="6"/></g>
<path d="M1012 222V239M1003 230.500H1020" stroke="#2e6a9c" stroke-width="2.600"/><path d="M1012 221L1009 225H1015ZM1012 240L1009 236H1015ZM1002 230.500L1006 228V233ZM1021 230.500L1017 228V233Z" fill="#2e6a9c" stroke="none"/>
<path d="M1009 248A7 7 0 1 0 1017 247" stroke="#456" stroke-width="2.400"/><path d="M1006 245H1012V251Z" fill="#456" stroke="none"/>
<rect x="1004.500" y="270.500" width="12" height="11" stroke-dasharray="1.500 1.500"/><path d="M1004 269.500H1020V282" stroke="#666"/>
<path d="M1004.500 288.500V302.500H1010V288.500Z" fill="#f4f4ee"/><path d="M1010 288.500L1020 303H1010Z" fill="#a8c8e0" stroke="#345"/>
<path d="M1003 318H1022" stroke-dasharray="5 2"/><path d="M1010 323L1014 312" stroke="#24557f" stroke-width="1.200"/>
<path d="M1003 340H1013" stroke-dasharray="3 2"/><path d="M1013 345L1018 334" stroke="#24557f" stroke-width="1.200"/>
<rect x="1004.500" y="357.500" width="14" height="11" fill="#e4eef6" stroke="#333"/><rect x="1010" y="355" width="3" height="3" class="bl" stroke="none"/>
<rect x="1004.500" y="379.500" width="14" height="10" fill="#e4eef6" stroke="#456"/><rect x="1004" y="378" width="4" height="4" class="bl" stroke="none"/><rect x="1015" y="378" width="4" height="4" class="bl" stroke="none"/>
<path d="M1002 406H1022" stroke="#222" stroke-width="1.400"/><path d="M1011 406L1005 402V410ZM1013 406L1019 402V410Z" fill="#223" stroke="none"/>
<path d="M1004 436V424C1005 422 1008 420 1019 420" stroke="#222"/><path d="M1004 424H1012M1012 420V428" stroke="#888" stroke-dasharray="1 1"/>
<path d="M1004 458V450C1004 446 1008 442 1019 442" stroke="#24557f" stroke-width="1.600"/>
</g>
<g transform="translate(1003 465)"><path d="M1 14L14 2" stroke="#d0a050" stroke-width="3"/><circle cx="6" cy="10" r="3" fill="#c8321e"/><circle cx="10" cy="6" r="2" fill="#c8321e"/><circle cx="3" cy="15" r="2" fill="#7a3818"/><path d="M14 1L17 4M11 1H14" stroke="#aab" /></g>
<path d="M1002 488.500H1024" stroke="#c5c2b2" shape-rendering="crispEdges"/>
<path d="M1002 490.500H1024" stroke="#fbfaf4" shape-rendering="crispEdges"/>
<path d="M1002.500 493.500H1024M1002.500 497.500H1024" stroke="#bbb8a8" shape-rendering="crispEdges"/>
<g shape-rendering="crispEdges">
<rect x="1003.500" y="504.500" width="11" height="11" fill="#d8e4f0" stroke="#3a6a9c"/><rect x="1007.500" y="508.500" width="10" height="10" fill="#3f70a8" stroke="#23507c"/><rect x="1014.500" y="513.500" width="8" height="8" fill="#d8e4f0" stroke="#6a90b0"/>
<rect x="1003.500" y="526.500" width="11" height="11" fill="#d8e4f0" stroke="#6a90b0"/><rect x="1007.500" y="530.500" width="10" height="10" fill="#3f70a8" stroke="#23507c"/><rect x="1014.500" y="535.500" width="8" height="8" fill="#d8e4f0" stroke="#6a90b0"/>
<rect x="1009.500" y="554.500" width="13" height="13" fill="#d8e4f0" stroke="#6a90b0"/><rect x="1004.500" y="549.500" width="13" height="13" fill="#3f70a8" stroke="#23507c"/>
<rect x="1004.500" y="571.500" width="13" height="13" fill="#3f70a8" stroke="#23507c"/><rect x="1009.500" y="576.500" width="13" height="13" fill="#dfe8f2" stroke="#6a90b0"/>
</g>
<path d="M1000 593.500H1024" stroke="#c5c2b2" shape-rendering="crispEdges"/>
</svg>
</body></html>
